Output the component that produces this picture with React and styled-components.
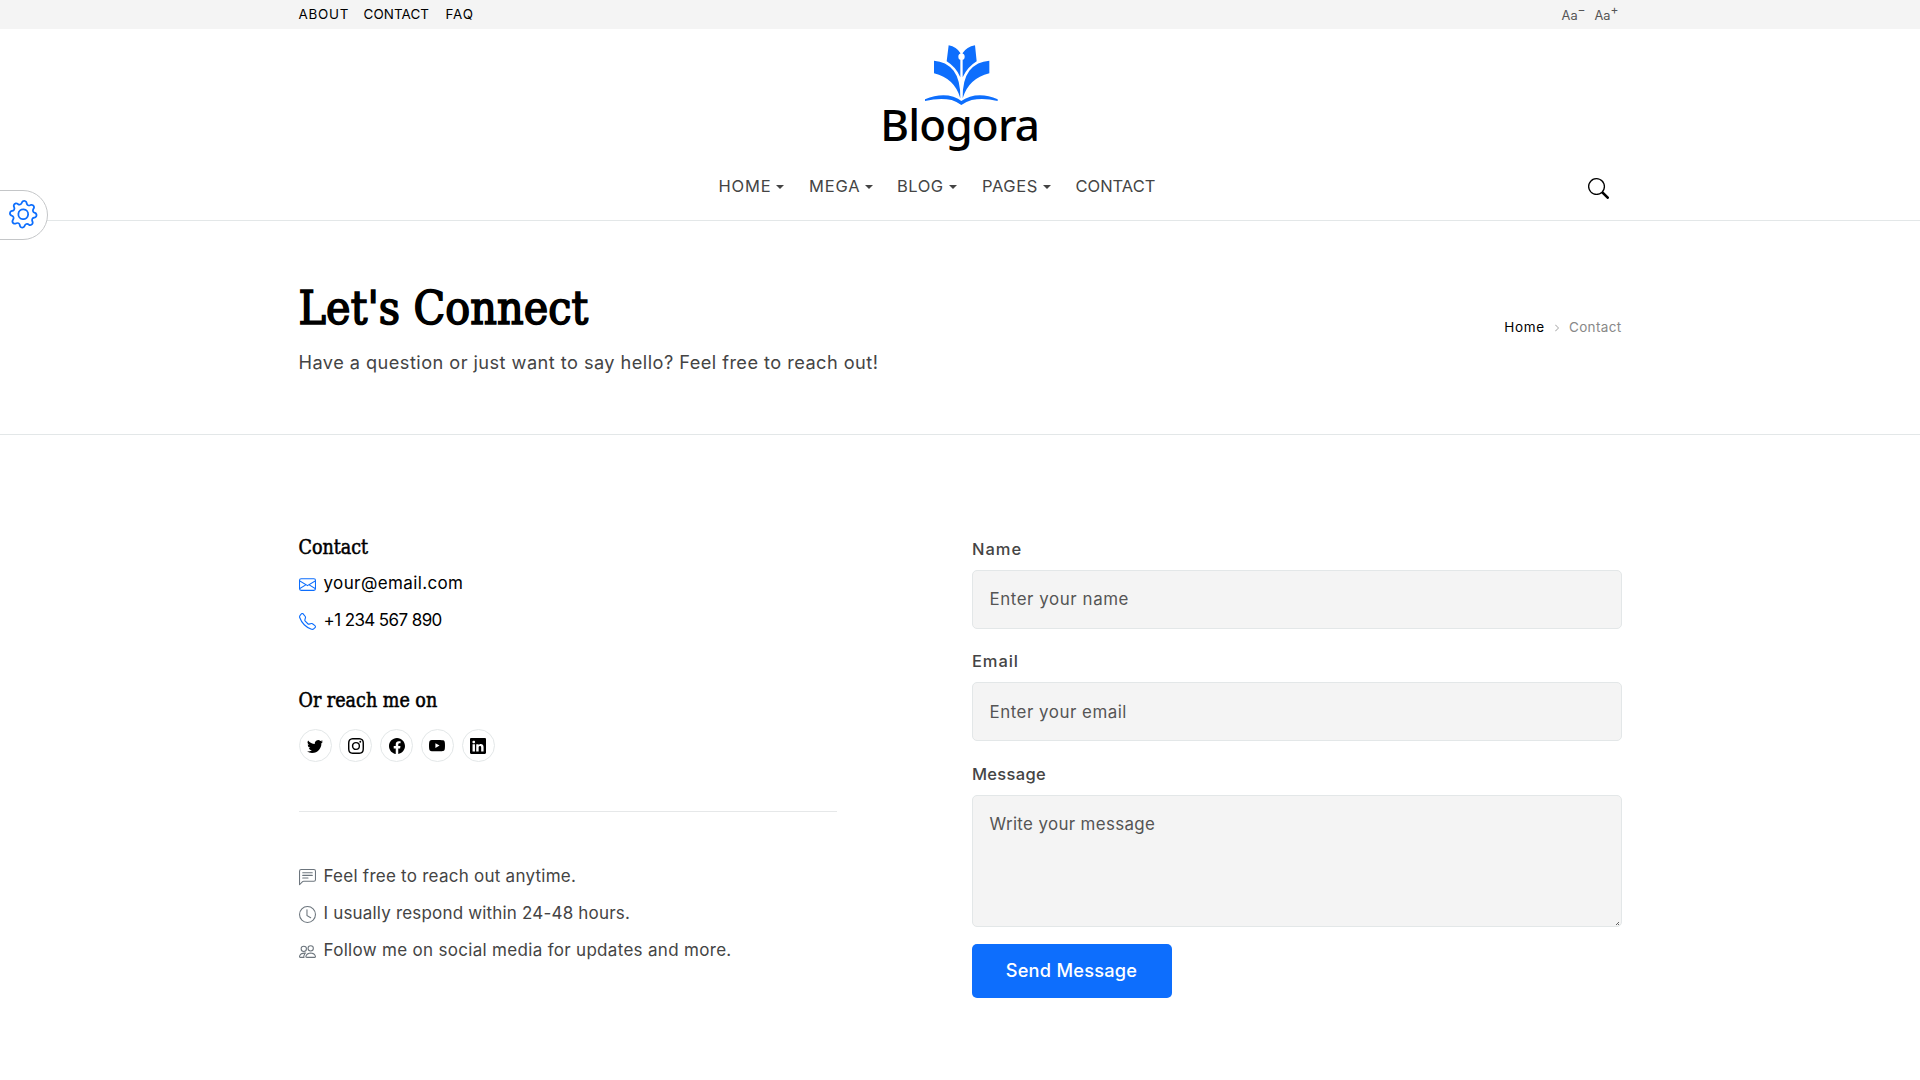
import styled, { createGlobalStyle } from "styled-components";
import {
  BsGear,
  BsSearch,
  BsEnvelope,
  BsTelephone,
  BsTwitter,
  BsInstagram,
  BsFacebook,
  BsYoutube,
  BsLinkedin,
  BsChatLeftText,
  BsClock,
  BsPeople,
  BsChevronRight,
} from "react-icons/bs";

const GlobalStyle = createGlobalStyle`
  * {
    box-sizing: border-box;
  }
  body {
    margin: 0;
    background: #fff;
    color: #444;
    font-family: Inter, "Liberation Sans", sans-serif;
    font-size: 16.5px;
    overflow: hidden;
  }
  a {
    color: inherit;
    text-decoration: none;
  }
`;

const Page = styled.div`
  height: 1080px;
`;

const Container = styled.div`
  width: 1323px;
  margin: 0 auto;
`;

const TopBar = styled.div`
  height: 28.5px;
  background: #f4f4f4;
`;

const TopBarInner = styled(Container)`
  display: flex;
  justify-content: space-between;
  align-items: center;
  height: 100%;
`;

const TopLinks = styled.nav`
  display: grid;
  grid-template-columns: 65px 82px auto;
  color: #000;
  font-size: 13.4px;
  line-height: 28px;
`;

const TopLink = styled.a`
  letter-spacing: ${({ $ls }) => $ls || 0}px;
`;

const FontSizes = styled.div`
  display: flex;
  gap: 9px;
  padding-right: 3px;
`;

const FontSize = styled.button`
  display: flex;
  border: 0;
  padding: 4px 0 0;
  background: none;
  color: #555;
  font: 12.8px/24px Inter, sans-serif;
  sup {
    font-size: 12px;
    line-height: 12px;
  }
`;

const Header = styled.header`
  height: 192.5px;
  border-bottom: 1px solid #e3e7e8;
`;

const LogoLink = styled.a`
  display: flex;
  justify-content: center;
  padding-top: 11.5px;
`;

const MenuRow = styled(Container)`
  display: flex;
  justify-content: space-between;
  align-items: center;
  height: 62px;
  padding: 0 12.5px 0 420px;
`;

const Menu = styled.nav`
  display: grid;
  grid-template-columns: 90.5px 88px 85px 93.5px 80px;
`;

const MenuLink = styled.a`
  display: flex;
  align-items: center;
  gap: 5px;
  font-size: 16.5px;
  letter-spacing: ${({ $ls }) => $ls || 0}px;
`;

const Caret = styled.span`
  border: 4.5px solid transparent;
  border-top-color: #444;
  border-bottom: 0;
  margin-top: 2px;
`;

const SearchButton = styled.button`
  display: flex;
  border: 0;
  padding: 4.5px 0 0;
  background: none;
  color: #000;
`;

const Settings = styled.button`
  position: fixed;
  left: -2px;
  top: 190px;
  display: flex;
  align-items: center;
  justify-content: flex-end;
  width: 50px;
  height: 49.5px;
  padding: 0 10px 1px 0;
  border: 1px solid #c4c6c8;
  border-radius: 0 25px 25px 0;
  background: #fff;
  color: #0d6efd;
  svg {
    transform: rotate(5deg);
  }
`;

const Hero = styled.section`
  height: 214px;
  border-bottom: 1px solid #e3e7e8;
`;

const HeroInner = styled(Container)`
  display: flex;
  justify-content: space-between;
  align-items: center;
  height: 100%;
`;

const Title = styled.h1`
  margin: 1px 0 11.5px;
  color: #000;
  font: 46px/56px "DejaVu Serif Condensed", "DejaVu Serif", serif;
  font-stretch: condensed;
  letter-spacing: 0.1px;
  -webkit-text-stroke: 1.6px #000;
`;

const Lead = styled.p`
  margin: 0;
  font-size: 18.2px;
  line-height: 28px;
  letter-spacing: 0.45px;
`;

const Breadcrumb = styled.div`
  display: flex;
  align-items: center;
  margin-bottom: 2px;
  color: #888;
  font-size: 13.5px;
  letter-spacing: 0.35px;
  a {
    color: #000;
    letter-spacing: 0.7px;
  }
  svg {
    margin: 2px 8px 0;
  }
`;

const Columns = styled(Container)`
  display: flex;
  justify-content: space-between;
  padding-top: 99px;
`;

const Info = styled.div`
  width: 538px;
  padding-top: 1px;
`;

const Form = styled.form`
  width: 650px;
  padding-top: 2.5px;
`;

const Heading = styled.h5`
  margin: 0 0 ${({ $gap }) => $gap}px;
  color: #000;
  font: 19.5px/26px "DejaVu Serif Condensed", "DejaVu Serif", serif;
  font-stretch: condensed;
  -webkit-text-stroke: 0.5px #000;
`;

const List = styled.ul`
  list-style: none;
  margin: 0 0 ${({ $gap }) => $gap || 0}px;
  padding: 0;
`;

const Item = styled.li`
  display: flex;
  align-items: center;
  gap: 8px;
  height: 36.8px;
  color: ${({ $dark }) => ($dark ? "#000" : "#444")};
  font-size: 17px;
  letter-spacing: ${({ $ls }) => $ls || 0}px;
  svg {
    margin-top: 3px;
    color: ${({ $dark }) => ($dark ? "#0d6efd" : "#6c757d")};
  }
`;

const Socials = styled.div`
  display: flex;
  gap: 7.8px;
`;

const Social = styled.a`
  display: flex;
  align-items: center;
  justify-content: center;
  width: 33px;
  height: 33px;
  border: 1px solid #e3e7e8;
  border-radius: 50%;
  color: #000;
`;

const Divider = styled.hr`
  margin: 48.5px 0 46.2px;
  border: 0;
  border-top: 1px solid #e6e8e9;
`;

const Label = styled.label`
  display: block;
  margin-bottom: 9px;
  padding-left: 0.5px;
  font-weight: 500;
  line-height: 24px;
  letter-spacing: ${({ $ls }) => $ls || 0}px;
`;

const Input = styled.input`
  display: block;
  width: 100%;
  height: 59px;
  margin-bottom: 20.6px;
  padding: 0 17px;
  border: 1px solid #e3e7e8;
  border-radius: 5px;
  background: #f4f4f4;
  font: 16.9px Inter, sans-serif;
  letter-spacing: ${({ $ls }) => $ls || 0}px;
  &::placeholder {
    color: #555;
    opacity: 1;
  }
`;

const MessageBox = styled.div`
  position: relative;
  margin-bottom: 17px;
`;

const TextArea = styled(Input).attrs({ as: "textarea" })`
  height: 132px;
  margin: 0;
  padding: 16px 17px;
  line-height: 24px;
  resize: none;
`;

const Grip = styled.svg`
  position: absolute;
  right: 3px;
  bottom: 2px;
`;

const Submit = styled.button`
  width: 200px;
  height: 54px;
  padding: 0 0 2px;
  border: 0;
  border-radius: 5px;
  background: #0d6efd;
  color: #fff;
  font: 500 18.2px Inter, sans-serif;
  letter-spacing: 0.25px;
`;

const menu = [
  { name: "HOME", ls: 0.8, sub: true },
  { name: "MEGA", ls: 0.8, sub: true },
  { name: "BLOG", ls: 0.5, sub: true },
  { name: "PAGES", ls: 0.6, sub: true },
  { name: "CONTACT", ls: 0 },
];

const socials = [BsTwitter, BsInstagram, BsFacebook, BsYoutube, BsLinkedin];

const Logo = () => (
  <svg width="160" height="115" viewBox="120 30 480 345">
    <g fill="#0d6efd">
      <path d="M326 46Q350 51 361 69V142Q348 111 320 94Z" />
      <path d="M405 46Q380 51 368 69V142Q382 111 410 94Z" />
      <path d="M282 92Q318 94 341 122Q362 150 361 205Q344 145 282 130Z" />
      <path d="M448 92Q411 94 388 122Q367 150 368 205Q386 145 448 130Z" />
      <path d="M255 208Q300 189 340 200Q356 205 364 213Q374 205 390 200Q430 189 473 208V213Q430 202 395 210Q378 215 364 225Q350 215 335 210Q300 202 255 213Z" />
    </g>
    <circle cx="364.500" cy="80" r="9.500" fill="#fff" />
    <text
      x="121"
      y="332"
      textLength="479"
      fontFamily="Noto Sans, sans-serif"
      fontSize="132"
      fontWeight="500"
      fill="#000"
    >
      Blogora
    </text>
  </svg>
);

const App = () => {
  return (
    <Page>
      <GlobalStyle />
      <TopBar>
        <TopBarInner>
          <TopLinks>
            <TopLink href="#" $ls={0.75}>ABOUT</TopLink>
            <TopLink href="#" $ls={0.1}>CONTACT</TopLink>
            <TopLink href="#" $ls={0.9}>FAQ</TopLink>
          </TopLinks>
          <FontSizes>
            <FontSize>Aa<sup>−</sup></FontSize>
            <FontSize>Aa<sup>+</sup></FontSize>
          </FontSizes>
        </TopBarInner>
      </TopBar>
      <Header>
        <LogoLink href="#">
          <Logo />
        </LogoLink>
        <MenuRow>
          <Menu>
            {menu.map((item) => (
              <MenuLink href="#" key={item.name} $ls={item.ls}>
                {item.name}
                {item.sub && <Caret />}
              </MenuLink>
            ))}
          </Menu>
          <SearchButton>
            <BsSearch size={21} />
          </SearchButton>
        </MenuRow>
      </Header>
      <Hero>
        <HeroInner>
          <div>
            <Title>Let's Connect</Title>
            <Lead>Have a question or just want to say hello? Feel free to reach out!</Lead>
          </div>
          <Breadcrumb>
            <a href="#">Home</a>
            <BsChevronRight size={8} />
            <span>Contact</span>
          </Breadcrumb>
        </HeroInner>
      </Hero>
      <Columns>
        <Info>
          <Heading $gap={4}>Contact</Heading>
          <List $gap={49.2}>
            <Item $dark $ls={0.38}><BsEnvelope size={17} />your@email.com</Item>
            <Item $dark $ls={-0.6}><BsTelephone size={17} />+1 234 567 890</Item>
          </List>
          <Heading $gap={15.3}>Or reach me on</Heading>
          <Socials>
            {socials.map((Icon, i) => (
              <Social href="#" key={i}>
                <Icon size={16} />
              </Social>
            ))}
          </Socials>
          <Divider />
          <List>
            <Item $ls={0.25}><BsChatLeftText size={17} />Feel free to reach out anytime.</Item>
            <Item $ls={0.18}><BsClock size={17} />I usually respond within 24-48 hours.</Item>
            <Item $ls={0.31}><BsPeople size={17} />Follow me on social media for updates and more.</Item>
          </List>
        </Info>
        <Form>
          <Label $ls={1}>Name</Label>
          <Input placeholder="Enter your name" $ls={0.57} />
          <Label $ls={0.9}>Email</Label>
          <Input placeholder="Enter your email" $ls={0.52} />
          <Label $ls={0.3}>Message</Label>
          <MessageBox>
            <TextArea placeholder="Write your message" $ls={0.36} />
            <Grip width="3" height="3" viewBox="0 0 3 3">
              <path d="M0 3L3 0M2 3L3 2" stroke="#666" />
            </Grip>
          </MessageBox>
          <Submit type="button">Send Message</Submit>
        </Form>
      </Columns>
      <Settings>
        <BsGear size={28.5} />
      </Settings>
    </Page>
  );
};

export default App;
